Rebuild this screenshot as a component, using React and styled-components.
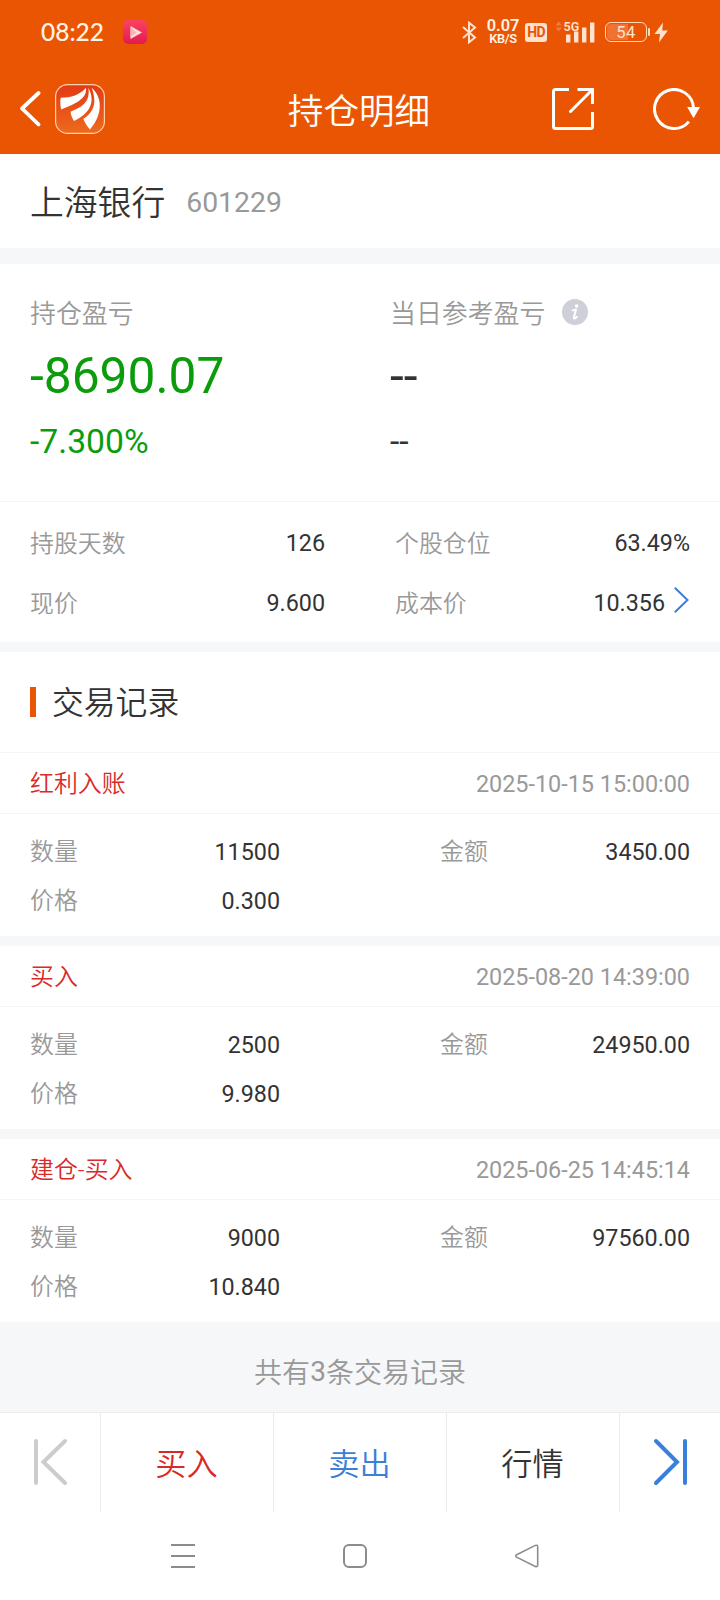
import React from 'react';
import styled, { createGlobalStyle } from 'styled-components';

const GlobalStyle = createGlobalStyle`
    * {
        box-sizing: border-box;
    }

    body {
        margin: 0;
        background: #fff;
        color: #333;
        font-family: Roboto, "Noto Sans CJK SC", sans-serif;
        font-weight: 400;
    }

    svg {
        display: block;
        flex: none;
    }
`

const Page = styled.div`
    width: 720px;
    height: 1600px;
    display: flex;
    flex-direction: column;
    overflow: hidden;
    background: #fff;
`

/* 状态栏 */
const StatusBar = styled.div`
    height: 64px;
    padding: 0 52px 0 41px;
    display: flex;
    align-items: center;
    background: #ea5504;
    color: #fff3e6;
`

const Clock = styled.span`
    width: 82px;
    font: 500 24.5px/30px Lato, sans-serif;
`

const StatusIcons = styled.div`
    margin-left: auto;
    display: flex;
    align-items: center;
`

const NetSpeed = styled.div`
    width: 34px;
    margin: 0 5px 0 9px;
    display: flex;
    flex-direction: column;
    align-items: center;
    font: 600 16.4px/13px Roboto, sans-serif;

    small {
        font-size: 12.8px;
        line-height: 13px;
        letter-spacing: -0.4px;
    }
`

const HdBadge = styled.span`
    width: 22px;
    height: 19px;
    margin-right: 8px;
    border-radius: 3px;
    background: #ffe3d0;
    color: #ea5504;
    font: 700 14px/19px Roboto, sans-serif;
    letter-spacing: -0.8px;
    text-align: center;
`

const Battery = styled.div`
    width: 42px;
    height: 20px;
    margin: 0 1px 0 10px;
    border: 1.5px solid #ffd9b8;
    border-radius: 6px;
    background: linear-gradient(to right, #ef7234 54%, transparent 54%) content-box;
    padding: 1px;
    color: #ffe3d0;
    font: 400 16.5px/17px Roboto, sans-serif;
    letter-spacing: 0.4px;
    text-align: center;
`

const BatteryTip = styled.i`
    width: 2px;
    height: 8px;
    margin-right: 4px;
    border-radius: 1px;
    background: #ffd9b8;
`

/* 标题栏 */
const TitleBar = styled.header`
    height: 90px;
    padding: 0 19px;
    display: grid;
    grid-template-columns: 1fr auto 1fr;
    align-items: center;
    background: #ea5504;
    color: #fff;

    h1 {
        margin: 5px 1px 0 -1px;
        font-size: 35.6px;
        font-weight: 350;
        line-height: 44px;
    }
`

const TitleSide = styled.div`
    display: flex;
    align-items: center;
    gap: ${props => props.$gap};
    justify-content: ${props => props.$end ? 'flex-end' : 'flex-start'};
`

const StockName = styled.section`
    height: 94px;
    padding: 5px 30px 0;
    display: flex;
    align-items: center;
    gap: 21px;
    font-size: 33.8px;
    font-weight: 350;
    line-height: 50px;

    span {
        margin-top: -2px;
        font-size: 28.4px;
        font-weight: 400;
        color: #999;
    }
`

const Divider = styled.div`
    height: ${props => props.$size || 10}px;
    flex: none;
    background: #f6f7f9;
`

const Profit = styled.section`
    height: 237px;
    padding: 28px 30px 0;
    display: grid;
    grid-template-columns: 360px 1fr;
`

const ProfitLabel = styled.div`
    height: 38px;
    display: flex;
    align-items: center;
    gap: 17px;
    font-size: 25.9px;
    font-weight: 350;
    color: #999;

    svg {
        margin-top: 2px;
    }
`

const ProfitValue = styled.div`
    height: 50px;
    margin-top: 21px;
    font-size: 49.7px;
    line-height: 50px;
    color: ${props => props.$green ? '#0b9c0b' : '#333'};
`

const ProfitRate = styled.div`
    height: 40px;
    margin-top: 21px;
    font-size: 33.7px;
    line-height: 40px;
    color: ${props => props.$green ? '#0b9c0b' : '#333'};
`

const Summary = styled.section`
    height: 141px;
    padding: 11px 30px 0;
    border-top: 1px solid #f5f5f5;
    display: grid;
    grid-template-columns: 295px 295px;
    grid-auto-rows: 60px;
    column-gap: 70px;
`

const Field = styled.div`
    display: flex;
    align-items: center;
    justify-content: space-between;
    font-size: 23.3px;
    line-height: 36px;

    label {
        padding-top: 1px;
        font-size: 23.9px;
        font-weight: 350;
        color: #999;
    }
`

const WithArrow = styled.span`
    display: flex;
    align-items: center;
    gap: 10px;

    svg {
        margin: -7px 1px 0 -1px;
    }
`

const SectionTitle = styled.h2`
    height: 100px;
    margin: 0;
    padding: 0 30px;
    display: flex;
    align-items: center;
    gap: 16px;
    font-size: 31.8px;
    font-weight: 350;
    line-height: 44px;

    &::before {
        content: '';
        width: 6px;
        height: 30px;
        background: #ea5504;
    }

    span {
        margin-top: 2px;
    }
`

const Record = styled.article`
    height: ${props => props.$first ? 184 : 183}px;
    border-top: ${props => props.$first ? '1px solid #f5f5f5' : '0'};
`

const RecordHead = styled.div`
    height: 61px;
    padding: 0 30px;
    display: flex;
    align-items: center;
    justify-content: space-between;
    border-bottom: 1px solid #f5f5f5;
    font-size: 23.4px;
    line-height: 36px;

    time {
        padding-top: 1px;
        color: #999;
    }
`

const RecordType = styled.span`
    padding-top: 2px;
    font-size: 23.9px;
    font-weight: 350;
    color: #d92a2a;
`

const RecordBody = styled.div`
    padding: 13px 30px 0;
    display: grid;
    grid-template-columns: 250px 250px;
    grid-auto-rows: 49px;
    column-gap: 160px;
`

const Total = styled.div`
    height: 90px;
    display: flex;
    align-items: center;
    justify-content: center;
    background: #f6f7f9;
    font-size: 28px;
    font-weight: 350;
    padding-top: 8px;
    color: #999;

    b {
        font-weight: 400;
    }
`

const Tabs = styled.nav`
    height: 100px;
    display: grid;
    grid-template-columns: 100px 173px 173px 173px 101px;
    border-top: 1px solid #ebebeb;
`

const Tab = styled.button`
    padding: 0 1px 2px 0;
    border: 0;
    border-left: ${props => props.$noBorder ? '0' : '1px solid #ebebeb'};
    background: #fff;
    display: flex;
    align-items: center;
    justify-content: center;
    font: inherit;
    font-size: 31.2px;
    font-weight: 350;
    color: ${props => props.$color};

    svg {
        margin-left: 1px;
    }
`

const NavBar = styled.div`
    height: 88px;
    display: flex;
    align-items: center;
    justify-content: center;
    gap: 148px;
    padding-right: 10px;
`

const records = [
    { type: '红利入账', time: '2025-10-15 15:00:00', count: '11500', amount: '3450.00', price: '0.300' },
    { type: '买入', time: '2025-08-20 14:39:00', count: '2500', amount: '24950.00', price: '9.980' },
    { type: '建仓-买入', time: '2025-06-25 14:45:14', count: '9000', amount: '97560.00', price: '10.840' },
]

function AppLogo() {
    return (
        <svg width="50" height="50" viewBox="0 0 50 50">
            <defs>
                <linearGradient id="logoBg" x1="0" y1="0" x2="0" y2="1">
                    <stop offset="0" stopColor="#e33a14" />
                    <stop offset="1" stopColor="#ee6a1c" />
                </linearGradient>
            </defs>
            <rect x="0.6" y="0.6" width="48.8" height="48.8" rx="12" fill="url(#logoBg)" stroke="#ffd2ac" strokeWidth="1.2" />
            <g fill="#fff">
                <path d="M5.7 13.8C16 13.8 25 11 31 3.8C32.5 15 19 20.5 6.2 25.5C5.2 22 5 18 5.7 13.8Z" />
                <path d="M33.3 3.8C35.5 17 28 23 15.5 27.7C16 31 17 34 19 37C36 29 40.5 17 33.3 3.8Z" />
                <path d="M36.7 3.8C42 18 39.5 28 28.3 35C30 39 32 42 35 45.5C47 32 48.5 14 36.7 3.8Z" />
            </g>
        </svg>
    )
}

function SignalIcon() {
    return (
        <svg width="40" height="26" viewBox="0 -2 40 26">
            <path d="M0.5 4.5L3.7 0.5L7 4.5ZM0.5 6.5L3.7 10.5L7 6.5Z" fill="#f07a3f" />
            <text x="8.6" y="9.6" fontFamily="Roboto" fontWeight="600" fontSize="12.5" fill="#ffe3d0">5G</text>
            <path d="M11 13.5h4.4v8H11zM19 10.5h4.4v11H19zM27 6.5h4.4v15H27zM35 1.5h4.4v20H35z" fill="#ffe3d0" />
        </svg>
    )
}

function App() {
    return (
        <>
            <GlobalStyle />
            <Page>
                <StatusBar>
                    <Clock>08:22</Clock>
                    <svg width="24" height="24" viewBox="0 0 24 24">
                        <defs>
                            <linearGradient id="playBg" x1="0" y1="0" x2="0" y2="1">
                                <stop offset="0" stopColor="#fb4460" />
                                <stop offset="1" stopColor="#e21a50" />
                            </linearGradient>
                        </defs>
                        <rect width="24" height="24" rx="5" fill="url(#playBg)" />
                        <path d="M7.5 6v13l11.5-6.5z" fill="#ffd9dc" />
                        <path d="M7.5 8v9l6-4.5z" fill="#fbb0ba" />
                    </svg>
                    <StatusIcons>
                        <svg width="15" height="23" viewBox="0 0 15 23" fill="none" stroke="#ffe3d0" strokeWidth="2">
                            <path d="M1 6L13 16.5L7 21.3V1.7L13 6.5L1 17" />
                        </svg>
                        <NetSpeed>0.07<small>KB/S</small></NetSpeed>
                        <HdBadge>HD</HdBadge>
                        <SignalIcon />
                        <Battery>54</Battery>
                        <BatteryTip />
                        <svg width="14" height="21" viewBox="0 0 14 21">
                            <path d="M9 0.5L0.5 12H6L5 20.5L13.8 8.5H8.2Z" fill="#ffe3d0" />
                        </svg>
                    </StatusIcons>
                </StatusBar>

                <TitleBar>
                    <TitleSide $gap="12px">
                        <svg width="24" height="38" viewBox="0 0 24 38" fill="none" stroke="#fff" strokeWidth="3.8" strokeLinecap="round" strokeLinejoin="round">
                            <path d="M19.6 3L3 18.5L19.6 34.5" />
                        </svg>
                        <AppLogo />
                    </TitleSide>
                    <h1>持仓明细</h1>
                    <TitleSide $gap="59px" $end>
                        <svg width="42" height="42" viewBox="0 0 42 42" fill="none" stroke="#fff" strokeWidth="3">
                            <path d="M17 1.5H3.5Q1.5 1.5 1.5 3.5V38.5Q1.5 40.5 3.5 40.5H38.5Q40.5 40.5 40.5 38.5V24M25.5 1.5H40.5V16" />
                            <path d="M40 2L18.5 23.5" strokeLinecap="round" />
                        </svg>
                        <svg width="48" height="42" viewBox="0 0 48 42">
                            <path d="M35.9 33.6A19.5 19.5 0 1 1 40.5 20" fill="none" stroke="#fff" strokeWidth="3" />
                            <path d="M34.2 19H47L40.5 30.2Z" fill="#fff" />
                        </svg>
                    </TitleSide>
                </TitleBar>

                <StockName>上海银行<span>601229</span></StockName>
                <Divider $size={16} />

                <Profit>
                    <div>
                        <ProfitLabel>持仓盈亏</ProfitLabel>
                        <ProfitValue $green>-8690.07</ProfitValue>
                        <ProfitRate $green>-7.300%</ProfitRate>
                    </div>
                    <div>
                        <ProfitLabel>
                            当日参考盈亏
                            <svg width="26" height="26" viewBox="0 0 26 26">
                                <circle cx="13" cy="13" r="13" fill="#cdd0d6" />
                                <circle cx="14.6" cy="7" r="1.8" fill="#fff" />
                                <path d="M10.6 11.4L14 10.6L11.8 18.8Q11.6 20.6 14.8 18" fill="none" stroke="#fff" strokeWidth="2" strokeLinejoin="round" strokeLinecap="round" />
                            </svg>
                        </ProfitLabel>
                        <ProfitValue>--</ProfitValue>
                        <ProfitRate>--</ProfitRate>
                    </div>
                </Profit>

                <Summary>
                    <Field><label>持股天数</label>126</Field>
                    <Field><label>个股仓位</label>63.49%</Field>
                    <Field><label>现价</label>9.600</Field>
                    <Field>
                        <label>成本价</label>
                        <WithArrow>
                            10.356
                            <svg width="15" height="26" viewBox="0 0 15 26" fill="none" stroke="#3a7fd9" strokeWidth="2">
                                <path d="M0.8 0.8L13.5 13L0.8 25.2" />
                            </svg>
                        </WithArrow>
                    </Field>
                </Summary>
                <Divider />

                <SectionTitle><span>交易记录</span></SectionTitle>
                {records.map((item, index) => (
                    <React.Fragment key={item.time}>
                        {index > 0 && <Divider />}
                        <Record $first={index === 0}>
                            <RecordHead>
                                <RecordType>{item.type}</RecordType>
                                <time>{item.time}</time>
                            </RecordHead>
                            <RecordBody>
                                <Field><label>数量</label>{item.count}</Field>
                                <Field><label>金额</label>{item.amount}</Field>
                                <Field><label>价格</label>{item.price}</Field>
                            </RecordBody>
                        </Record>
                    </React.Fragment>
                ))}
                <Total>共有<b>{records.length}</b>条交易记录</Total>

                <Tabs>
                    <Tab $noBorder>
                        <svg width="34" height="48" viewBox="0 0 34 48" fill="none" stroke="#ccc" strokeWidth="4" strokeLinecap="round">
                            <path d="M3 3V45M32 3L10.5 24L32 45" />
                        </svg>
                    </Tab>
                    <Tab $color="#d92a2a">买入</Tab>
                    <Tab $color="#3a7fd9">卖出</Tab>
                    <Tab $color="#333">行情</Tab>
                    <Tab>
                        <svg width="34" height="48" viewBox="0 0 34 48" fill="none" stroke="#3a7fd9" strokeWidth="4" strokeLinecap="round">
                            <path d="M32 3V45M3 3L24 24L3 45" />
                        </svg>
                    </Tab>
                </Tabs>

                <NavBar>
                    <svg width="24" height="24" viewBox="0 0 24 24" stroke="#8c8c8c" strokeWidth="2">
                        <path d="M0 1H24M0 12H24M0 23H24" />
                    </svg>
                    <svg width="24" height="24" viewBox="0 0 24 24" fill="none" stroke="#8c8c8c" strokeWidth="2">
                        <rect x="1" y="1" width="22" height="22" rx="5" />
                    </svg>
                    <svg width="24" height="24" viewBox="0 0 24 24" fill="none" stroke="#8c8c8c" strokeWidth="1.6">
                        <path d="M1.6 10.7L20.3 1.4Q22.7 0.6 22.7 3V20.8Q22.7 23.2 20.3 22.4L1.6 13.1Q-0.2 11.9 1.6 10.7Z" />
                    </svg>
                </NavBar>
            </Page>
        </>
    );
}

export default App;
